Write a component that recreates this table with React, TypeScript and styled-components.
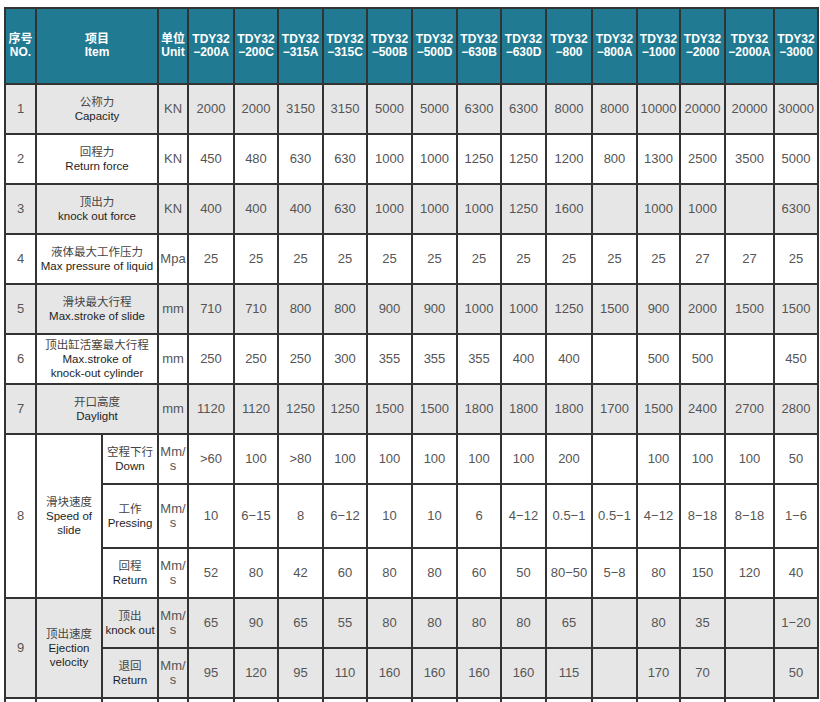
import React from "react";
import styled, { createGlobalStyle } from "styled-components";

const Global = createGlobalStyle`
  html, body { margin: 0; padding: 0; background: #fff; overflow: hidden; }
  body { font-family: "Liberation Sans", Arial, "Noto Sans CJK SC", sans-serif; }
`;

const Page = styled.div`
  padding: 7px 0 0 4px;
`;

const Table = styled.table`
  border-collapse: collapse;
  table-layout: fixed;
  width: 813px;
`;

const HeadRow = styled.tr`
  height: 76px;
  background: #207a92;
`;

const HeadCell = styled.th`
  border: 2px solid #333;
  color: #fff;
  font-weight: bold;
  font-size: 12px;
  line-height: 13px;
  text-align: center;
  vertical-align: middle;
  padding: 0;
  white-space: nowrap;
  font-family: "Liberation Sans", Arial, "Noto Sans CJK SC", sans-serif;
`;

const Row = styled.tr<{ $shade: boolean; $h: number }>`
  height: ${(p) => p.$h}px;
  background: ${(p) => (p.$shade ? "#e6e6e6" : "#ffffff")};
`;

const Cell = styled.td`
  border: 2px solid #333;
  text-align: center;
  vertical-align: middle;
  padding: 0 1px;
  font-size: 13px;
  line-height: 14px;
  color: #555;
  overflow: hidden;
`;

const Label = styled.td`
  border: 2px solid #333;
  text-align: center;
  vertical-align: middle;
  padding: 0 1px;
  font-size: 11.5px;
  line-height: 14px;
  color: #222;
`;

const Cn = styled.div`
  color: #444;
  font-family: "Liberation Sans", "Noto Sans CJK SC", sans-serif;
  font-size: 11.5px;
`;

const En = styled.div`
  color: #1e1e1e;
`;

const models = [
  "200A", "200C", "315A", "315C", "500B", "500D", "630B", "630D",
  "800", "800A", "1000", "2000", "2000A", "3000",
];
const widths = [31, 66, 56, 30, 46, 44, 45, 44, 45, 45, 44, 45, 46, 45, 43, 45, 49, 44];

type Simple = { no: string; cn: string; en: string[]; unit: string; vals: string[] };

const simpleRows: Simple[] = [
  { no: "1", cn: "公称力", en: ["Capacity"], unit: "KN", vals: ["2000", "2000", "3150", "3150", "5000", "5000", "6300", "6300", "8000", "8000", "10000", "20000", "20000", "30000"] },
  { no: "2", cn: "回程力", en: ["Return force"], unit: "KN", vals: ["450", "480", "630", "630", "1000", "1000", "1250", "1250", "1200", "800", "1300", "2500", "3500", "5000"] },
  { no: "3", cn: "顶出力", en: ["knock out force"], unit: "KN", vals: ["400", "400", "400", "630", "1000", "1000", "1000", "1250", "1600", "", "1000", "1000", "", "6300"] },
  { no: "4", cn: "液体最大工作压力", en: ["Max pressure of liquid"], unit: "Mpa", vals: ["25", "25", "25", "25", "25", "25", "25", "25", "25", "25", "25", "27", "27", "25"] },
  { no: "5", cn: "滑块最大行程", en: ["Max.stroke of slide"], unit: "mm", vals: ["710", "710", "800", "800", "900", "900", "1000", "1000", "1250", "1500", "900", "2000", "1500", "1500"] },
  { no: "6", cn: "顶出缸活塞最大行程", en: ["Max.stroke of", "knock-out cylinder"], unit: "mm", vals: ["250", "250", "250", "300", "355", "355", "355", "400", "400", "", "500", "500", "", "450"] },
  { no: "7", cn: "开口高度", en: ["Daylight"], unit: "mm", vals: ["1120", "1120", "1250", "1250", "1500", "1500", "1800", "1800", "1800", "1700", "1500", "2400", "2700", "2800"] },
];

type Sub = { cn: string; en: string; h: number; vals: string[] };
type Group = { no: string; cn: string; en: string[]; shade: boolean; subs: Sub[] };

const groups: Group[] = [
  {
    no: "8", cn: "滑块速度", en: ["Speed of", "slide"], shade: false,
    subs: [
      { cn: "空程下行", en: "Down", h: 50, vals: [">60", "100", ">80", "100", "100", "100", "100", "100", "200", "", "100", "100", "100", "50"] },
      { cn: "工作", en: "Pressing", h: 64, vals: ["10", "6−15", "8", "6−12", "10", "10", "6", "4−12", "0.5−1", "0.5−1", "4−12", "8−18", "8−18", "1−6"] },
      { cn: "回程", en: "Return", h: 50, vals: ["52", "80", "42", "60", "80", "80", "60", "50", "80−50", "5−8", "80", "150", "120", "40"] },
    ],
  },
  {
    no: "9", cn: "顶出速度", en: ["Ejection", "velocity"], shade: true,
    subs: [
      { cn: "顶出", en: "knock out", h: 50, vals: ["65", "90", "65", "55", "80", "80", "80", "80", "65", "", "80", "35", "", "1−20"] },
      { cn: "退回", en: "Return", h: 50, vals: ["95", "120", "95", "110", "160", "160", "160", "160", "115", "", "170", "70", "", "50"] },
    ],
  },
];

const UnitSplit = () => (
  <>
    Mm/
    <br />s
  </>
);

export default function App() {
  return (
    <Page>
      <Global />
      <Table>
        <colgroup>
          {widths.map((w, i) => (
            <col key={i} style={{ width: w }} />
          ))}
        </colgroup>
        <tbody>
          <HeadRow>
            <HeadCell>序号<br />NO.</HeadCell>
            <HeadCell colSpan={2}>项目<br />Item</HeadCell>
            <HeadCell>单位<br />Unit</HeadCell>
            {models.map((m) => (
              <HeadCell key={m}>TDY32<br />−{m}</HeadCell>
            ))}
          </HeadRow>
          {simpleRows.map((r, i) => (
            <Row key={r.no} $shade={i % 2 === 0} $h={50}>
              <Cell>{r.no}</Cell>
              <Label colSpan={2}>
                <Cn>{r.cn}</Cn>
                {r.en.map((e) => (
                  <En key={e}>{e}</En>
                ))}
              </Label>
              <Cell>{r.unit}</Cell>
              {r.vals.map((v, j) => (
                <Cell key={j}>{v}</Cell>
              ))}
            </Row>
          ))}
          {groups.map((g) =>
            g.subs.map((s, si) => (
              <Row key={g.no + si} $shade={g.shade} $h={s.h}>
                {si === 0 && (
                  <>
                    <Cell rowSpan={g.subs.length}>{g.no}</Cell>
                    <Label rowSpan={g.subs.length}>
                      <Cn>{g.cn}</Cn>
                      {g.en.map((e) => (
                        <En key={e}>{e}</En>
                      ))}
                    </Label>
                  </>
                )}
                <Label>
                  <Cn>{s.cn}</Cn>
                  <En>{s.en}</En>
                </Label>
                <Cell>
                  <UnitSplit />
                </Cell>
                {s.vals.map((v, j) => (
                  <Cell key={j}>{v}</Cell>
                ))}
              </Row>
            ))
          )}
          <Row $shade={false} $h={50}>
            {widths.map((_, i) => (i === 1 ? null : <Cell key={i} colSpan={i === 2 ? 1 : 1} />))}
          </Row>
        </tbody>
      </Table>
    </Page>
  );
}
